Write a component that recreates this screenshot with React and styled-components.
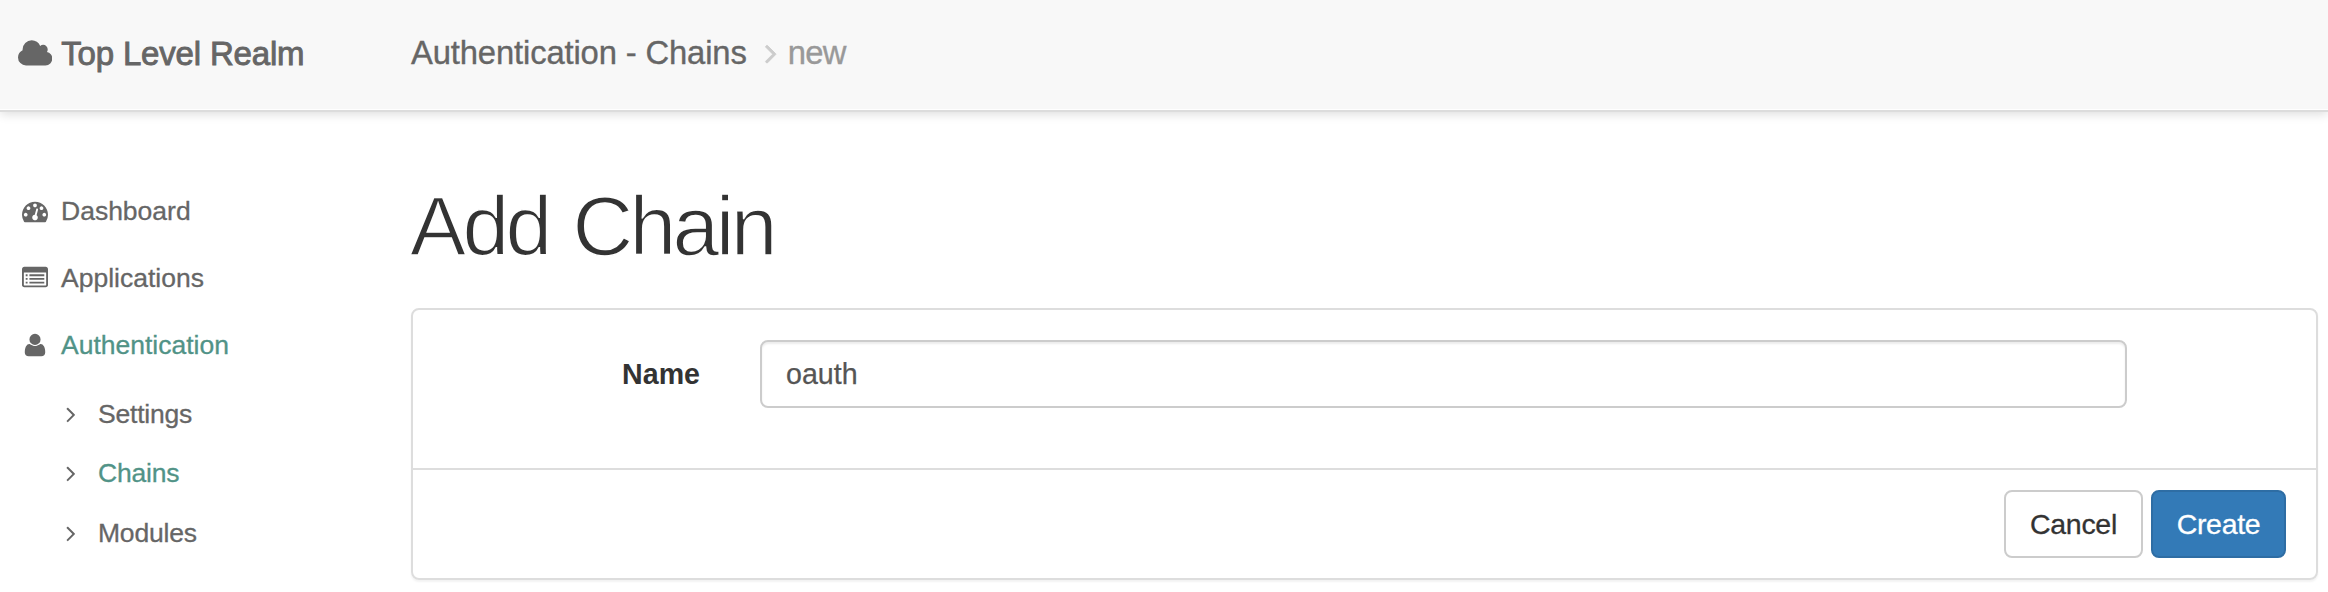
import React from "react";
import styled, { createGlobalStyle } from "styled-components";

const GlobalStyle = createGlobalStyle`
  *, *::before, *::after { box-sizing: border-box; }
  body {
    margin: 0;
    background: #fff;
    color: #333;
    font-family: "Liberation Sans", Arial, sans-serif;
    font-size: 28px;
  }
  #root { height: 592px; overflow: hidden; }
`;

const PATHS = {
  cloud:
    "M1984 1152q0 159-112.5 271.5t-271.5 112.5h-1088q-185 0-316.5-131.5t-131.5-316.5q0-132 71-241.5t187-163.5q-2-28-2-43 0-212 150-362t362-150q158 0 286.5 88t187.5 230q70-62 166-62 106 0 181 75t75 181q0 75-41 138 129 30 213 134.5t84 239.5z",
  dashboard:
    "M384 1152q0-53-37.5-90.5t-90.5-37.5-90.5 37.5-37.5 90.5 37.5 90.5 90.5 37.5 90.5-37.5 37.5-90.5zm192-448q0-53-37.5-90.5t-90.5-37.5-90.5 37.5-37.5 90.5 37.5 90.5 90.5 37.5 90.5-37.5 37.5-90.5zm428 481l101-382q6-26-7.5-48.5t-38.5-29.5-48 6.5-30 39.5l-101 382q-60 5-107 43.5t-63 98.5q-20 77 20 146t117 89 146-20 89-117q16-60-6-117t-72-91zm660-33q0-53-37.5-90.5t-90.5-37.5-90.5 37.5-37.5 90.5 37.5 90.5 90.5 37.5 90.5-37.5 37.5-90.5zm-640-640q0-53-37.5-90.5t-90.5-37.5-90.5 37.5-37.5 90.5 37.5 90.5 90.5 37.5 90.5-37.5 37.5-90.5zm448 192q0-53-37.5-90.5t-90.5-37.5-90.5 37.5-37.5 90.5 37.5 90.5 90.5 37.5 90.5-37.5 37.5-90.5zm320 448q0 261-141 483-19 29-54 29h-1402q-35 0-54-29-141-221-141-483 0-182 71-348t191-286 286-191 348-71 348 71 286 191 191 286 71 348z",
  list:
    "M256 640h128v128h-128zM256 896h128v128h-128zM256 1152h128v128h-128zM512 640h1024v128h-1024zM512 896h1024v128h-1024zM512 1152h1024v128h-1024zM1664 1376v-832q0-13-9.5-22.5t-22.5-9.5h-1472q-13 0-22.5 9.5t-9.5 22.5v832q0 13 9.5 22.5t22.5 9.5h1472q13 0 22.5-9.5t9.5-22.5zm128-1088v1088q0 66-47 113t-113 47h-1472q-66 0-113-47t-47-113v-1088q0-66 47-113t113-47h1472q66 0 113 47t47 113z",
  user:
    "M1600 1405q0 120-73 189.5t-194 69.5h-874q-121 0-194-69.5t-73-189.5q0-53 3.5-103.5t14-109 26.5-108.5 43-97.5 62-81 85.5-53.5 111.5-20q9 0 42 21.5t74.5 48 108 48 133.5 21.5 133.5-21.5 108-48 74.5-48 42-21.5q61 0 111.5 20t85.5 53.5 62 81 43 97.5 26.5 108.5 14 109 3.5 103.5zm-320-893q0 159-112.5 271.5t-271.5 112.5-271.5-112.5-112.5-271.5 112.5-271.5 271.5-112.5 271.5 112.5 112.5 271.5z",
  angle:
    "M1171 960q0 13-10 23l-466 466q-10 10-23 10t-23-10l-50-50q-10-10-10-23t10-23l393-393-393-393q-10-10-10-23t10-23l50-50q10-10 23-10t23 10l466 466q10 10 10 23z",
};

const Svg = styled.svg`
  display: block;
  flex: none;
  fill: currentColor;
  stroke: currentColor;
`;

const Icon = ({ name, size, viewBox = "0 0 1792 1792", width = size, weight = 0 }) => (
  <Svg
    width={width}
    height={size}
    viewBox={viewBox}
    fillRule="evenodd"
    strokeWidth={weight}
    aria-hidden="true"
  >
    <path d={PATHS[name]} />
  </Svg>
);

const Header = styled.header`
  display: flex;
  height: 112px;
  padding-left: 18px;
  background: #f8f8f8;
  border-bottom: 2px solid #dcdcdc;
  box-shadow: inset 0 -1px 0 #fff, 0 2px 10px rgba(0, 0, 0, 0.14);
  color: #666;
  font-size: 32.8px;
  line-height: 38px;
`;

const Brand = styled.a`
  display: flex;
  width: 393px;
  padding-top: 35px;
  gap: 9px;
  font-size: 33px;
  letter-spacing: -0.18px;
  -webkit-text-stroke: 0.9px currentColor;
`;

const BrandIcon = styled.span`
  padding-top: 3px;
`;

const Crumbs = styled.nav`
  display: flex;
  padding-top: 34px;
  letter-spacing: -0.15px;
  -webkit-text-stroke: 0.35px currentColor;
`;

const CrumbDivider = styled.span`
  margin: 3px 9px 0 8px;
  width: 24px;
  color: #ccc;
`;

const Current = styled.span`
  color: #999;
  letter-spacing: -0.7px;
`;

const Body = styled.div`
  display: flex;
`;

const Sidebar = styled.nav`
  width: 411px;
  padding: 65px 0 0 22px;
  color: #666;
  font-size: 26.5px;
`;

const NavItem = styled.a`
  display: flex;
  align-items: center;
  height: ${(p) => (p.$nested ? 59.5 : 67)}px;
  padding-left: ${(p) => (p.$nested ? 36 : 0)}px;
  gap: ${(p) => (p.$nested ? 14 : 13)}px;
  letter-spacing: ${(p) => (p.$nested ? "-0.2px" : "0")};
`;

const SubNav = styled.div`
  padding-top: 6px;
`;

const NavLabel = styled.span`
  line-height: 30px;
  color: ${(p) => (p.$active ? "#519387" : "inherit")};
  -webkit-text-stroke: 0.3px currentColor;
`;

const Main = styled.main`
  flex: 1;
  padding: 68px 10px 0 0;
`;

const Title = styled.h1`
  margin: 0 0 0 -1px;
  height: 128px;
  font-size: 84px;
  font-weight: 400;
  line-height: 92px;
  letter-spacing: -3.6px;
  word-spacing: 4px;
  -webkit-text-stroke: 1.5px #fff;
`;

const Panel = styled.section`
  height: 272px;
  border: 2px solid #ddd;
  border-radius: 8px;
  box-shadow: 0 2px 2px rgba(0, 0, 0, 0.05);
`;

const PanelBody = styled.div`
  display: flex;
  height: 158px;
  padding: 30px 189px 0 0;
`;

const Label = styled.label`
  width: 347px;
  padding-right: 60px;
  text-align: right;
  font-size: 28.6px;
  font-weight: 700;
  line-height: 68px;
`;

const Input = styled.input`
  flex: 1;
  height: 68px;
  padding: 0 24px;
  border: 2px solid #ccc;
  border-radius: 8px;
  background: #fff;
  box-shadow: inset 0 2px 2px rgba(0, 0, 0, 0.075);
  color: #555;
  font: 28.6px "Liberation Sans", Arial, sans-serif;
  -webkit-text-stroke: 0.25px currentColor;
  outline: none;
`;

const PanelFooter = styled.footer`
  display: flex;
  justify-content: flex-end;
  gap: 8px;
  height: 110px;
  padding: 20px 30px 0 0;
  border-top: 2px solid #ddd;
`;

const Button = styled.button`
  width: ${(p) => (p.$primary ? 135 : 139)}px;
  height: 68px;
  padding: 0;
  border: 2px solid ${(p) => (p.$primary ? "#2e6da4" : "#ccc")};
  border-radius: 8px;
  background: ${(p) => (p.$primary ? "#337ab7" : "#fff")};
  color: ${(p) => (p.$primary ? "#fff" : "#333")};
  font: 28.5px "Liberation Sans", Arial, sans-serif;
  letter-spacing: -0.3px;
  -webkit-text-stroke: 0.3px currentColor;
`;

const NAV = [
  { label: "Dashboard", icon: "dashboard" },
  { label: "Applications", icon: "list" },
  { label: "Authentication", icon: "user", active: true },
];

const SUB_NAV = [{ label: "Settings" }, { label: "Chains", active: true }, { label: "Modules" }];

export default function App() {
  return (
    <>
      <GlobalStyle />
      <Header>
        <Brand>
          <BrandIcon>
            <Icon name="cloud" size={32} width={34.3} viewBox="64 0 1920 1792" />
          </BrandIcon>
          Top Level Realm
        </Brand>
        <Crumbs>
          <span>Authentication - Chains</span>
          <CrumbDivider>
            <Icon name="angle" size={32} weight={50} />
          </CrumbDivider>
          <Current>new</Current>
        </Crumbs>
      </Header>
      <Body>
        <Sidebar>
          {NAV.map((item) => (
            <NavItem key={item.label}>
              <Icon name={item.icon} size={26} />
              <NavLabel $active={item.active}>{item.label}</NavLabel>
            </NavItem>
          ))}
          <SubNav>
            {SUB_NAV.map((item) => (
              <NavItem key={item.label} $nested>
                <Icon name="angle" size={26} />
                <NavLabel $active={item.active}>{item.label}</NavLabel>
              </NavItem>
            ))}
          </SubNav>
        </Sidebar>
        <Main>
          <Title>Add Chain</Title>
          <Panel>
            <PanelBody>
              <Label htmlFor="chain-name">Name</Label>
              <Input id="chain-name" defaultValue="oauth" />
            </PanelBody>
            <PanelFooter>
              <Button type="button">Cancel</Button>
              <Button type="button" $primary>
                Create
              </Button>
            </PanelFooter>
          </Panel>
        </Main>
      </Body>
    </>
  );
}
